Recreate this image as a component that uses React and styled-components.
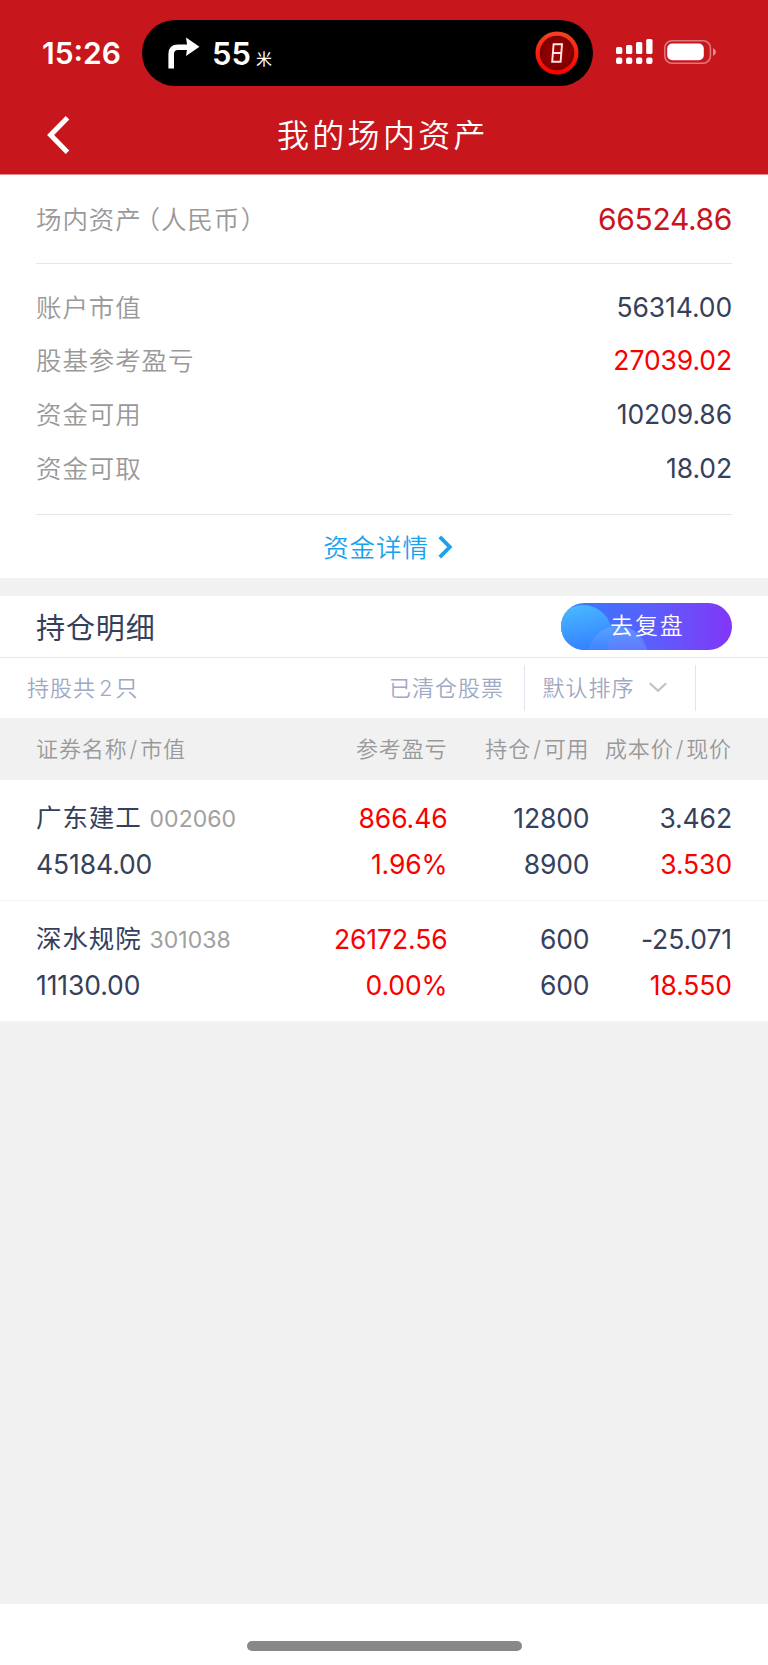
import React from 'react';
import styled, { createGlobalStyle } from 'styled-components';

const summary = [
  { label: '账户市值', value: '56314.00' },
  { label: '股基参考盈亏', value: '27039.02', up: true },
  { label: '资金可用', value: '10209.86' },
  { label: '资金可取', value: '18.02' },
];

const stocks = [
  {
    name: '广东建工', code: '002060', market: '45184.00',
    profit: '866.46', rate: '1.96%', hold: '12800', usable: '8900',
    cost: '3.462', price: '3.530',
  },
  {
    name: '深水规院', code: '301038', market: '11130.00',
    profit: '26172.56', rate: '0.00%', hold: '600', usable: '600',
    cost: '-25.071', price: '18.550',
  },
];

const TurnIcon = () => (
  <svg width="32" height="32" viewBox="0 0 32 32">
    <path d="M3.2 31.5V17Q3.2 10.2 10 10.2H20" fill="none" stroke="#fff" strokeWidth="5.6" />
    <path d="M18 .5L31.5 9.8L18 19L19.4 10Z" fill="#fff" />
  </svg>
);

const LightIcon = () => (
  <svg width="44" height="44" viewBox="0 0 44 44">
    <defs>
      <radialGradient id="lamp">
        <stop offset="0" stopColor="#a80000" />
        <stop offset="1" stopColor="#760000" />
      </radialGradient>
      <linearGradient id="ring" x1="0" y1="0" x2="0" y2="1">
        <stop offset="0" stopColor="#f4401f" />
        <stop offset="1" stopColor="#ff0000" />
      </linearGradient>
    </defs>
    <circle cx="22" cy="22" r="19.4" fill="url(#lamp)" stroke="url(#ring)" strokeWidth="4.2" />
    <path d="M18.6 13.3H27L25.6 30.8H17.2ZM18 22H26" fill="none" stroke="#ffe6e6" strokeWidth="1.9" />
  </svg>
);

const SignalIcon = () => (
  <svg width="38" height="26" viewBox="0 0 38 26" fill="#fff">
    <rect x="0" y="8" width="6.3" height="7" rx="1.6" />
    <rect x="10" y="6" width="6.3" height="9" rx="1.6" />
    <rect x="20" y="3" width="6.3" height="12" rx="1.6" />
    <rect x="30.2" y="0" width="6.3" height="15" rx="1.6" />
    <rect x="0" y="18.5" width="6.3" height="6.5" rx="2" />
    <rect x="10" y="18.5" width="6.3" height="6.5" rx="2" />
    <rect x="20" y="18.5" width="6.3" height="6.5" rx="2" />
    <rect x="30.2" y="18.5" width="6.3" height="6.5" rx="2" />
  </svg>
);

const BatteryIcon = () => (
  <svg width="53" height="24" viewBox="0 0 53 24">
    <rect x=".8" y=".8" width="45.6" height="22.4" rx="7.2" fill="none" stroke="#fff" strokeOpacity=".42" strokeWidth="1.6" />
    <rect x="3.2" y="3.6" width="36.6" height="16.6" rx="5" fill="#fff" />
    <path d="M49 8Q52 9.5 52 12T49 16Z" fill="#fff" fillOpacity=".5" />
  </svg>
);

const BackIcon = () => (
  <svg width="24" height="38" viewBox="0 0 24 38">
    <path d="M20.5 1.8L3.6 19L20.5 36.2" fill="none" stroke="#fff" strokeWidth="5" />
  </svg>
);

const MoreIcon = () => (
  <svg width="15" height="24" viewBox="0 0 15 24">
    <path d="M1.8 1.8L11.8 12L1.8 22.2" fill="none" stroke="#1aa1ee" strokeWidth="3.8" />
  </svg>
);

const DownIcon = () => (
  <svg width="18" height="11" viewBox="0 0 18 11">
    <path d="M.8 1.2L9 8.8L17.2 1.2" fill="none" stroke="#bfc2cb" strokeWidth="2.2" />
  </svg>
);

const Bubbles = () => (
  <svg width="171" height="47" viewBox="0 0 171 47">
    <defs>
      <linearGradient id="big" x1=".4" y1="0" x2=".6" y2="1">
        <stop offset="0" stopColor="#48b8ff" />
        <stop offset="1" stopColor="#2f70ff" />
      </linearGradient>
      <linearGradient id="small" x1="0" y1="0" x2="0" y2="1">
        <stop offset="0" stopColor="#62a8ff" stopOpacity=".75" />
        <stop offset=".5" stopColor="#5c86ff" stopOpacity=".2" />
      </linearGradient>
    </defs>
    <circle cx="22" cy="31" r="29" fill="url(#big)" />
    <circle cx="57" cy="53" r="30" fill="url(#small)" />
    <path d="M46 47Q48 35 56 27Q78 29 86 47Z" fill="#7fa4ff" fillOpacity=".22" />
  </svg>
);

const App = () => (
  <Page>
    <GlobalStyle />
    <Header>
      <StatusBar>
        <Clock>15:26</Clock>
        <Island>
          <TurnIcon />
          <Distance>55</Distance>
          <Unit>米</Unit>
          <LightIcon />
        </Island>
        <SignalIcon />
        <BatteryIcon />
      </StatusBar>
      <NavBar>
        <BackIcon />
        <Title>我的场内资产</Title>
      </NavBar>
    </Header>

    <Card>
      <TotalRow>
        <Label>场内资产<Paren $open>（</Paren>人民币<Paren>）</Paren></Label>
        <Total>66524.86</Total>
      </TotalRow>
      <SummaryList>
        {summary.map((item) => (
          <SummaryRow key={item.label}>
            <Label>{item.label}</Label>
            <Num $up={item.up}>{item.value}</Num>
          </SummaryRow>
        ))}
      </SummaryList>
      <DetailLink>
        <span>资金详情</span>
        <MoreIcon />
      </DetailLink>
    </Card>

    <SectionHead>
      <SectionTitle>持仓明细</SectionTitle>
      <ReviewButton>
        <Bubbles />
        <span>去复盘</span>
      </ReviewButton>
    </SectionHead>

    <FilterBar>
      <Count>持股共<b>2</b>只</Count>
      <Cleared>已清仓股票</Cleared>
      <Sort>
        <span>默认排序</span>
        <DownIcon />
      </Sort>
    </FilterBar>

    <TableHead>
      <HeadCell>证券名称<i>/</i>市值</HeadCell>
      <HeadCell $right>参考盈亏</HeadCell>
      <HeadCell $right>持仓<i>/</i>可用</HeadCell>
      <HeadCell $right>成本价<i>/</i>现价</HeadCell>
    </TableHead>

    {stocks.map((s) => (
      <StockRow key={s.code}>
        <StockName>{s.name}<Code>{s.code}</Code></StockName>
        <Num $up>{s.profit}</Num>
        <Num>{s.hold}</Num>
        <Num>{s.cost}</Num>
        <Num $left>{s.market}</Num>
        <Num $up>{s.rate}</Num>
        <Num>{s.usable}</Num>
        <Num $up>{s.price}</Num>
      </StockRow>
    ))}

    <Footer>
      <HomeBar />
    </Footer>
  </Page>
);

export default App;

const GlobalStyle = createGlobalStyle`
  *{
    box-sizing: border-box;
  }
  body{
    margin: 0;
    font-family: Inter, "Noto Sans CJK SC", sans-serif;
  }
  svg{
    display: block;
    flex: none;
  }
`;
const Page = styled.div`
    display: flex;
    flex-direction: column;
    width: 768px;
    height: 1665px;
    overflow: hidden;
    background: #f1f1f1;
`;
const Header = styled.div`
    height: 175px;
    flex: none;
    color: white;
    background: #c7161c;
    border-bottom: 1px solid #e28b8e;
`;
const StatusBar = styled.div`
    display: flex;
    align-items: center;
    height: 86px;
    padding: 20px 0 0 42px;
    > svg{
      margin: -3px 0 0 23px;
    }
    > svg + svg{
      margin-left: 10px;
    }
`;
const Clock = styled.div`
    width: 100px;
    font-size: 30px;
    font-weight: 600;
    line-height: 66px;
    white-space: nowrap;
`;
const Island = styled.div`
    display: flex;
    align-items: center;
    width: 451px;
    height: 66px;
    padding: 0 14px 0 26px;
    border-radius: 33px;
    background: black;
    > svg:last-child{
      margin-left: auto;
    }
`;
const Distance = styled.span`
    margin-left: 12px;
    font-size: 31px;
    font-weight: 600;
`;
const Unit = styled.span`
    margin: 9px 0 0 5px;
    font-size: 16px;
`;
const NavBar = styled.div`
    display: flex;
    align-items: center;
    height: 88px;
    padding: 10px 0 0 47px;
`;
const Title = styled.div`
    margin-left: 206px;
    font-size: 32px;
    letter-spacing: 3.3px;
    line-height: 40px;
    font-weight: 350;
    padding-top: 2px;
`;
const Card = styled.div`
    height: 403px;
    flex: none;
    padding: 0 36px;
    background: white;
`;
const TotalRow = styled.div`
    display: flex;
    justify-content: space-between;
    align-items: center;
    height: 89px;
    border-bottom: 1px solid #e6e6e6;
`;
const Label = styled.span`
    padding-bottom: 3px;
    font-size: 25.5px;
    font-weight: 350;
    letter-spacing: 0.9px;
    color: #999;
`;
// half-width form of the full-width bracket
const Paren = styled.span`
    font-feature-settings: "halt";
    margin-left: ${(p) => (p.$open ? '5.7px' : '0.5px')};
`;
const Total = styled.span`
    font-size: 30px;
    letter-spacing: -0.35px;
    color: #c7161c;
`;
const SummaryList = styled.div`
    height: 251px;
    padding-top: 16px;
    border-bottom: 1px solid #e6e6e6;
`;
const SummaryRow = styled.div`
    display: flex;
    justify-content: space-between;
    align-items: center;
    height: 53.6px;
`;
const Num = styled.span`
    font-size: 26.5px;
    line-height: 46px;
    letter-spacing: -0.1px;
    text-align: ${(p) => (p.$left ? 'left' : 'right')};
    color: ${(p) => (p.$up ? '#fa0000' : '#363f5c')};
`;
const DetailLink = styled.div`
    display: flex;
    align-items: center;
    justify-content: center;
    gap: 9px;
    height: 63px;
    font-size: 25.5px;
    font-weight: 350;
    letter-spacing: 0.9px;
    color: #1aa1ee;
    padding-left: 8px;
    span{
      padding-bottom: 3px;
    }
`;
const SectionHead = styled.div`
    display: flex;
    justify-content: space-between;
    align-items: center;
    height: 62px;
    flex: none;
    margin-top: 18px;
    padding: 0 36px;
    background: white;
    border-bottom: 1px solid #e3e7f0;
`;
const SectionTitle = styled.div`
    padding-bottom: 2px;
    font-size: 29px;
    letter-spacing: 0.9px;
    color: #363f5c;
`;
const ReviewButton = styled.div`
    position: relative;
    display: flex;
    width: 171px;
    height: 47px;
    padding-left: 49px;
    overflow: hidden;
    border-radius: 24px;
    background: linear-gradient(90deg, #2e80ff, #6159fb 60%, #8236f8);
    color: white;
    font-size: 23px;
    font-weight: 350;
    letter-spacing: 1.9px;
    line-height: 47px;
    svg{
      position: absolute;
      left: 0;
      top: 0;
    }
    span{
      position: relative;
    }
`;
const FilterBar = styled.div`
    display: flex;
    align-items: center;
    height: 60px;
    flex: none;
    padding: 0 72px 0 27px;
    background: white;
    color: #9fa9c2;
    font-size: 22px;
    font-weight: 350;
    letter-spacing: 1px;
`;
const Count = styled.div`
    flex: 1;
    padding-bottom: 4px;
    b{
      margin: 0 2px 0 3px;
      font-weight: 350;
    }
`;
const Cleared = styled.div`
    padding: 0 20px 4px 0;
`;
const Sort = styled.div`
    display: flex;
    align-items: center;
    gap: 14px;
    width: 172px;
    height: 46px;
    padding-left: 17.5px;
    border: solid #e0e5ef;
    border-width: 0 1.5px;
    span{
      padding-bottom: 4px;
    }
    svg{
      margin-top: -1px;
    }
`;
const columns = '269px 142.5px 142px 142.5px';
const TableHead = styled.div`
    display: grid;
    grid-template-columns: ${columns};
    align-items: center;
    height: 62px;
    flex: none;
    padding: 0 36px 4px;
`;
const HeadCell = styled.div`
    font-size: 22px;
    font-weight: 350;
    letter-spacing: 0.9px;
    color: #999;
    white-space: nowrap;
    text-align: ${(p) => (p.$right ? 'right' : 'left')};
    i{
      margin: 0 2px;
      font-style: normal;
    }
`;
const StockRow = styled.div`
    display: grid;
    grid-template-columns: ${columns};
    grid-template-rows: 46px 46px;
    align-items: center;
    height: 121px;
    flex: none;
    padding: 15px 36px 0;
    background: white;
    border-bottom: 1px solid #f4f4f4;
`;
const StockName = styled.div`
    font-size: 25.5px;
    line-height: 46px;
    letter-spacing: 0.9px;
    color: #363f5c;
`;
const Code = styled.span`
    margin-left: 8px;
    font-size: 23px;
    letter-spacing: 0;
    color: #a0a0a0;
`;
const Footer = styled.div`
    display: flex;
    justify-content: center;
    height: 61px;
    margin-top: auto;
    padding-top: 37px;
    background: white;
`;
const HomeBar = styled.div`
    width: 275px;
    height: 10px;
    border-radius: 5px;
    background: #888;
`;
